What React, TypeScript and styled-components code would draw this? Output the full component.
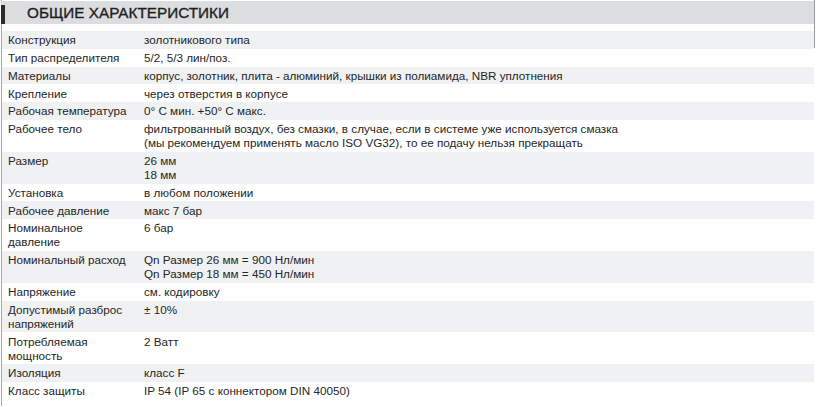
import React from 'react';
import styled, {createGlobalStyle} from 'styled-components';

type Spec = {
    label: string;
    value: string[];
};

const specs: Spec[] = [
    {label: 'Конструкция', value: ['золотникового типа']},
    {label: 'Тип распределителя', value: ['5/2, 5/3 лин/поз.']},
    {label: 'Материалы', value: ['корпус, золотник, плита - алюминий, крышки из полиамида, NBR уплотнения']},
    {label: 'Крепление', value: ['через отверстия в корпусе']},
    {label: 'Рабочая температура', value: ['0° C мин. +50° C макс.']},
    {
        label: 'Рабочее тело',
        value: [
            'фильтрованный воздух, без смазки, в случае, если в системе уже используется смазка',
            '(мы рекомендуем применять масло ISO VG32), то ее подачу нельзя прекращать',
        ],
    },
    {label: 'Размер', value: ['26 мм', '18 мм']},
    {label: 'Установка', value: ['в любом положении']},
    {label: 'Рабочее давление', value: ['макс 7 бар']},
    {label: 'Номинальное давление', value: ['6 бар']},
    {label: 'Номинальный расход', value: ['Qn Размер 26 мм = 900 Нл/мин', 'Qn Размер 18 мм = 450 Нл/мин']},
    {label: 'Напряжение', value: ['см. кодировку']},
    {label: 'Допустимый разброс напряжений', value: ['± 10%']},
    {label: 'Потребляемая мощность', value: ['2 Ватт']},
    {label: 'Изоляция', value: ['класс F']},
    {label: 'Класс защиты', value: ['IP 54 (IP 65 с коннектором DIN 40050)']},
];

const App: React.FunctionComponent = () => {
    return (
        <>
            <GlobalStyle/>
            <Sheet>
                <Header>
                    <Marker/>
                    <Title>Общие характеристики</Title>
                </Header>
                <Table>
                    {specs.map((spec, i) => (
                        <Row key={spec.label} $striped={i % 2 === 0}>
                            <Label>{spec.label}</Label>
                            <Value>
                                {spec.value.map((line) => (
                                    <div key={line}>{line}</div>
                                ))}
                            </Value>
                        </Row>
                    ))}
                </Table>
            </Sheet>
        </>
    );
}

const GlobalStyle = createGlobalStyle`
    html, body {
        margin: 0;
        padding: 0;
        background: #ffffff;
    }
    body {
        font-family: "Liberation Sans", Arial, sans-serif;
        color: #262626;
    }
`;

const Sheet = styled.div`
    position: relative;
    width: 813px;
    margin-left: 1px;
    padding-top: 1px;
    border-left: 1px solid #a8a8a8;
    min-height: 406px;
    box-sizing: border-box;
    &::after {
        content: '';
        position: absolute;
        top: 0;
        right: -1px;
        width: 1px;
        height: 48px;
        background: #9c9c9c;
    }
`;

const Header = styled.div`
    display: flex;
    align-items: flex-end;
    height: 23px;
    margin-left: -1px;
    background: #dcdddf;
`;

const Marker = styled.div`
    width: 4px;
    height: 19px;
    background: #2b2b2b;
`;

const Title = styled.h2`
    align-self: center;
    margin: 1px 0 0 22px;
    font-size: 15.3px;
    font-weight: 400;
    -webkit-text-stroke: 0.35px #1f1f1f;
    text-transform: uppercase;
    color: #1f1f1f;
`;

const Table = styled.div`
    display: flex;
    flex-direction: column;
    margin-top: 7px;
`;

const Row = styled.div<{$striped: boolean}>`
    display: grid;
    grid-template-columns: 136px 1fr;
    padding: 2.3px 6px 1.5px;
    font-size: 11.7px;
    line-height: 14px;
    background: ${({$striped}) => ($striped ? '#f0f1f3' : '#ffffff')};
`;

const Label = styled.div`
    padding-right: 8px;
`;

const Value = styled.div``;

export default App;
